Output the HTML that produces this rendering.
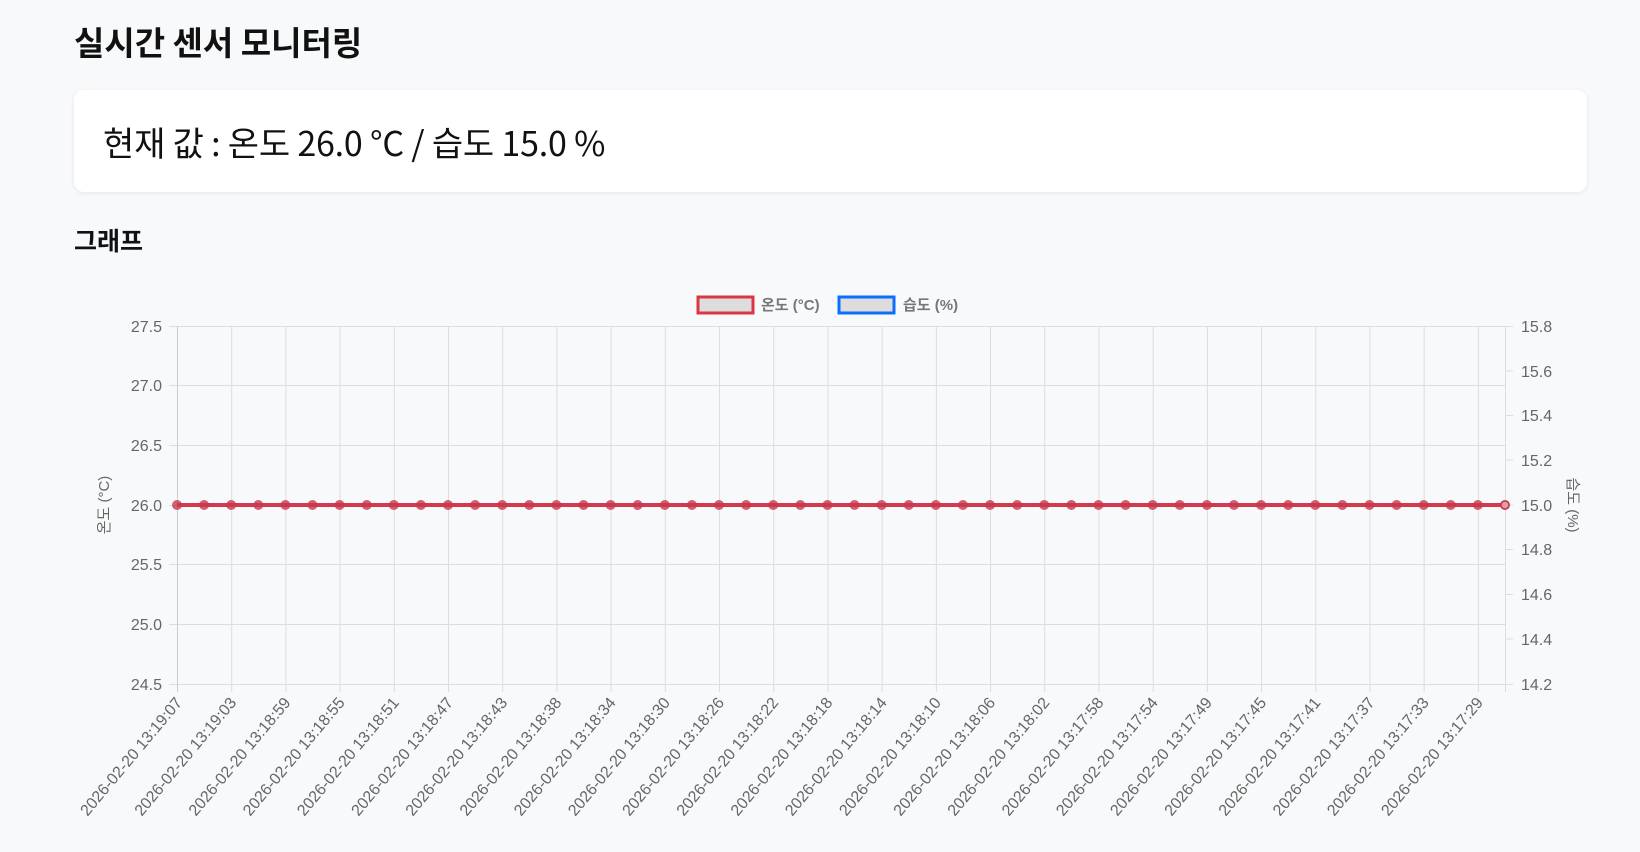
<!DOCTYPE html>
<html><head><meta charset="utf-8"><style>
body{margin:0;background:#f8f9fa;width:1640px;height:852px;overflow:hidden;font-family:"Liberation Sans","Noto Sans CJK KR",sans-serif;color:#111}
h1{position:absolute;left:74px;top:17px;margin:0;font-size:33px;font-weight:700;font-family:"Noto Sans CJK KR",sans-serif;letter-spacing:0}
.card{position:absolute;left:74px;top:90px;width:1513px;height:102px;background:#fff;border-radius:10px;box-shadow:0 1px 4px rgba(0,0,0,0.08)}
.card div{position:absolute;left:29px;top:27px;font-size:34px;font-family:"Noto Sans CJK KR",sans-serif;letter-spacing:-0.2px}
h2{position:absolute;left:74px;top:222px;margin:0;font-size:25px;font-weight:700;font-family:"Noto Sans CJK KR",sans-serif}
svg{position:absolute;left:0;top:0}
</style></head><body>
<h1>실시간 센서 모니터링</h1>
<div class="card"><div>현재 값 : 온도 26.0 °C / 습도 15.0 %</div></div>
<h2>그래프</h2>
<svg width="1640" height="852" font-family="Liberation Sans, Noto Sans CJK KR, sans-serif" fill="#666">
<defs><pattern id="vg" x="177" y="0" width="54.204" height="10" patternUnits="userSpaceOnUse"><line x1="0.5" y1="0" x2="0.5" y2="10" stroke="#ddd" stroke-width="1"/></pattern></defs>
<rect x="177" y="326" width="1329" height="366" fill="url(#vg)"/>
<line x1="1505.5" y1="326" x2="1505.5" y2="692" stroke="#ddd"/>
<g stroke="#ddd">
<line x1="169" y1="326.5" x2="1513" y2="326.5"/><line x1="169" y1="385.5" x2="1505" y2="385.5"/><line x1="169" y1="445.5" x2="1505" y2="445.5"/><line x1="169" y1="505.5" x2="1505" y2="505.5"/><line x1="169" y1="564.5" x2="1505" y2="564.5"/><line x1="169" y1="624.5" x2="1505" y2="624.5"/><line x1="169" y1="684.5" x2="1513" y2="684.5"/>
<line x1="1505" y1="371" x2="1513" y2="371"/><line x1="1505" y1="415.5" x2="1513" y2="415.5"/><line x1="1505" y1="460" x2="1513" y2="460"/><line x1="1505" y1="505" x2="1513" y2="505"/><line x1="1505" y1="549.5" x2="1513" y2="549.5"/><line x1="1505" y1="594.5" x2="1513" y2="594.5"/><line x1="1505" y1="639" x2="1513" y2="639"/>
</g>
<line x1="177.5" y1="326" x2="177.5" y2="692" stroke="#ccc"/>
<g font-size="16" text-anchor="end">
<text x="162" y="332">27.5</text><text x="162" y="391">27.0</text><text x="162" y="451">26.5</text><text x="162" y="511">26.0</text><text x="162" y="570">25.5</text><text x="162" y="630">25.0</text><text x="162" y="690">24.5</text>
</g>
<g font-size="16">
<text x="1521" y="332">15.8</text><text x="1521" y="377">15.6</text><text x="1521" y="421">15.4</text><text x="1521" y="466">15.2</text><text x="1521" y="511">15.0</text><text x="1521" y="555">14.8</text><text x="1521" y="600">14.6</text><text x="1521" y="645">14.4</text><text x="1521" y="690">14.2</text>
</g>
<text transform="translate(109,505) rotate(-90)" text-anchor="middle" font-size="15">온도 (°C)</text>
<text transform="translate(1568,505) rotate(90)" text-anchor="middle" font-size="15">습도 (%)</text>
<line x1="177" y1="505" x2="1505" y2="505" stroke="#d13a50" stroke-width="4"/>
<line x1="177" y1="505" x2="1506" y2="505" stroke="#c9384e" stroke-width="10" stroke-linecap="round" stroke-dasharray="0 27.102" opacity="0.8"/>
<circle cx="1505" cy="505" r="4" fill="#d9a0aa" stroke="#c9384e" stroke-width="1.5"/>
<rect x="698" y="297" width="55" height="16" fill="#ddd" stroke="#dc3545" stroke-width="3"/>
<text x="761" y="310" font-size="15" font-weight="bold" fill="#777">온도 (°C)</text>
<rect x="839" y="297" width="55" height="16" fill="#ddd" stroke="#0d6efd" stroke-width="3"/>
<text x="903" y="310" font-size="15" font-weight="bold" fill="#777">습도 (%)</text>
<g font-size="16" text-anchor="end">
<text transform="translate(183,703) rotate(-50)">2026-02-20 13:19:07</text>
<text transform="translate(237.2,703) rotate(-50)">2026-02-20 13:19:03</text>
<text transform="translate(291.4,703) rotate(-50)">2026-02-20 13:18:59</text>
<text transform="translate(345.6,703) rotate(-50)">2026-02-20 13:18:55</text>
<text transform="translate(399.8,703) rotate(-50)">2026-02-20 13:18:51</text>
<text transform="translate(454,703) rotate(-50)">2026-02-20 13:18:47</text>
<text transform="translate(508.2,703) rotate(-50)">2026-02-20 13:18:43</text>
<text transform="translate(562.4,703) rotate(-50)">2026-02-20 13:18:38</text>
<text transform="translate(616.6,703) rotate(-50)">2026-02-20 13:18:34</text>
<text transform="translate(670.8,703) rotate(-50)">2026-02-20 13:18:30</text>
<text transform="translate(725,703) rotate(-50)">2026-02-20 13:18:26</text>
<text transform="translate(779.2,703) rotate(-50)">2026-02-20 13:18:22</text>
<text transform="translate(833.4,703) rotate(-50)">2026-02-20 13:18:18</text>
<text transform="translate(887.7,703) rotate(-50)">2026-02-20 13:18:14</text>
<text transform="translate(941.9,703) rotate(-50)">2026-02-20 13:18:10</text>
<text transform="translate(996.1,703) rotate(-50)">2026-02-20 13:18:06</text>
<text transform="translate(1050.3,703) rotate(-50)">2026-02-20 13:18:02</text>
<text transform="translate(1104.5,703) rotate(-50)">2026-02-20 13:17:58</text>
<text transform="translate(1158.7,703) rotate(-50)">2026-02-20 13:17:54</text>
<text transform="translate(1212.9,703) rotate(-50)">2026-02-20 13:17:49</text>
<text transform="translate(1267.1,703) rotate(-50)">2026-02-20 13:17:45</text>
<text transform="translate(1321.3,703) rotate(-50)">2026-02-20 13:17:41</text>
<text transform="translate(1375.5,703) rotate(-50)">2026-02-20 13:17:37</text>
<text transform="translate(1429.7,703) rotate(-50)">2026-02-20 13:17:33</text>
<text transform="translate(1483.9,703) rotate(-50)">2026-02-20 13:17:29</text>
</g>
</svg>
</body></html>
